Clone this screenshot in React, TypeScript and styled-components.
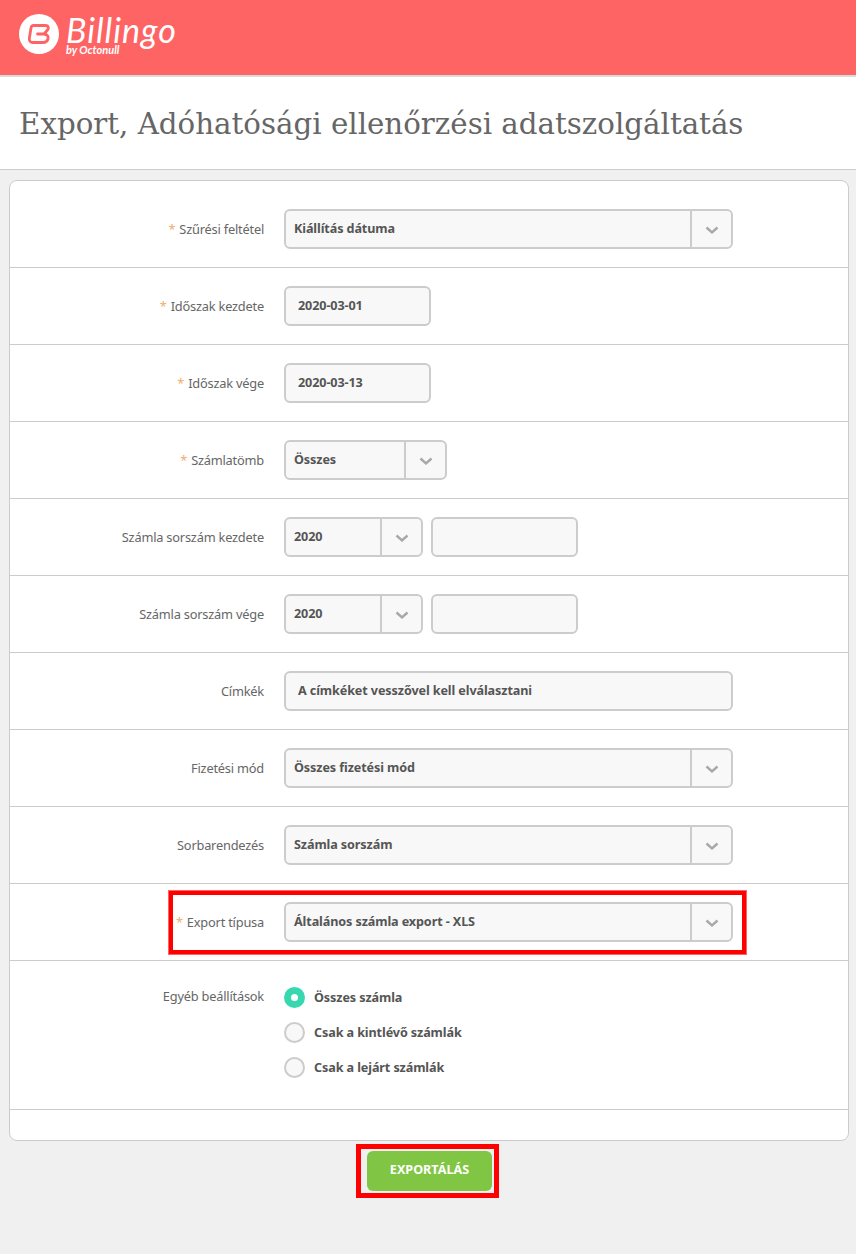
import React from "react";
import styled, { createGlobalStyle } from "styled-components";

const GlobalStyle = createGlobalStyle`
  html, body {
    margin: 0;
    padding: 0;
    background: #f0f0f0;
    font-family: "Noto Sans", "Open Sans", sans-serif;
    color: #555;
  }
`;

const Page = styled.div`
  width: 856px;
  height: 1254px;
  overflow: hidden;
`;

const Header = styled.header`
  height: 67px;
  background: #ff6464;
  border-bottom: 2px solid #d9d9d9;
  display: flex;
  align-items: center;
  padding: 0 0 8px 19px;
  gap: 7px;
`;

const Wordmark = styled.div`
  display: flex;
  flex-direction: column;
  color: #fff;
  margin-top: 5px;
`;

const WordmarkName = styled.span`
  font-family: "Lato", sans-serif;
  font-style: italic;
  font-size: 34px;
  line-height: 27px;
  letter-spacing: 1px;
`;

const WordmarkBy = styled.span`
  font-family: "Lato", sans-serif;
  font-style: italic;
  font-weight: 700;
  font-size: 11px;
  line-height: 13px;
`;

const TitleBar = styled.div`
  height: 92px;
  background: #fff;
  border-bottom: 1px solid #ccc;
  display: flex;
  align-items: center;
  padding-left: 19px;
`;

const Title = styled.h1`
  margin: 2px 0 0;
  font-family: "DejaVu Serif", serif;
  font-weight: 400;
  font-size: 29.3px;
  color: #666;
  white-space: nowrap;
`;

const Card = styled.div`
  margin: 10px 7px 0 9px;
  height: 961px;
  box-sizing: border-box;
  background: #fff;
  border: 1px solid #ccc;
  border-radius: 8px;
`;

const Row = styled.div<{ $first?: boolean; $top?: boolean }>`
  position: relative;
  display: grid;
  grid-template-columns: 254px 1fr;
  column-gap: 20px;
  align-items: ${(p) => (p.$top ? "start" : "center")};
  box-sizing: border-box;
  height: ${(p) => (p.$first ? "87px" : "77px")};
  padding-top: ${(p) => (p.$first ? "9px" : "0")};
  border-bottom: 1px solid #ccc;
`;

const OptionsRow = styled(Row)`
  height: 149px;
  padding-top: 26px;
`;

const Label = styled.label`
  text-align: right;
  font-size: 12.8px;
  letter-spacing: -0.2px;
  color: #666;
  white-space: nowrap;
`;

const Required = styled.span`
  color: #f0ad6e;
  margin-right: 4px;
`;

const Controls = styled.div`
  display: flex;
  gap: 8px;
`;

const Field = styled.div<{ $width: number; $inset?: number }>`
  width: ${(p) => p.$width}px;
  height: 40px;
  box-sizing: border-box;
  background: #f8f8f8;
  border: 2px solid #ccc;
  border-radius: 6px;
  padding: 0 0 1px ${(p) => p.$inset ?? 11}px;
  display: flex;
  align-items: center;
  font-size: 12.6px;
  font-weight: 700;
  letter-spacing: -0.1px;
  color: #555;
  white-space: nowrap;
`;

const SelectBox = styled(Field)`
  padding: 0 0 0 8px;
  justify-content: space-between;
`;

const SelectValue = styled.span`
  padding-bottom: 1px;
`;

const Arrow = styled.span`
  width: 41px;
  height: 100%;
  flex: none;
  border-left: 2px solid #ccc;
  display: flex;
  align-items: center;
  justify-content: center;
  padding-top: 3px;
  box-sizing: border-box;
`;

const RadioList = styled.div`
  display: flex;
  flex-direction: column;
  gap: 14px;
`;

const RadioRow = styled.div`
  display: flex;
  align-items: center;
  gap: 9px;
  height: 21px;
  font-size: 12.6px;
  font-weight: 700;
  letter-spacing: -0.1px;
  color: #555;
`;

const RadioDot = styled.span<{ $on?: boolean }>`
  width: 21px;
  height: 21px;
  box-sizing: border-box;
  border-radius: 50%;
  flex: none;
  background: ${(p) => (p.$on ? "#37d8b0" : "#f8f8f8")};
  border: 2px solid ${(p) => (p.$on ? "#37d8b0" : "#ccc")};
  display: flex;
  align-items: center;
  justify-content: center;
  &::after {
    content: "";
    display: ${(p) => (p.$on ? "block" : "none")};
    width: 7px;
    height: 7px;
    border-radius: 50%;
    background: #fff;
  }
`;

const Highlight = styled.div`
  position: absolute;
  left: 158px;
  top: 6px;
  width: 579px;
  height: 65px;
  box-sizing: border-box;
  border: 5px solid #f00;
  outline: 1px solid #ff6464;
  outline-offset: -1px;
  pointer-events: none;
`;

const Footer = styled.div`
  display: flex;
  justify-content: center;
  padding: 3px 1px 0 0;
`;

const ButtonFrame = styled.div`
  width: 143px;
  height: 54px;
  box-sizing: border-box;
  border: 5px solid #f00;
  display: flex;
  align-items: center;
  justify-content: center;
  padding-left: 4px;
`;

const ExportButton = styled.button`
  width: 125px;
  height: 40px;
  border: none;
  border-radius: 6px;
  background: #80c644;
  color: #fff;
  font-family: "Noto Sans", sans-serif;
  font-weight: 700;
  font-size: 12.6px;
  padding: 0 0 3px;
`;

const Chevron = () => (
  <svg width="14" height="9" viewBox="0 0 14 9" fill="none">
    <path d="M1.5 1.5 7 6.5 12.5 1.5" stroke="#a8a8a8" strokeWidth="2.4" />
  </svg>
);

const LogoMark = () => (
  <svg width="40" height="40" viewBox="0 0 40 40" fill="none">
    <circle cx="20" cy="20" r="20" fill="#fff" />
    <path
      d="M14.500 11.500H26.500C29.500 11.500 30 14 28.500 16L25 20C28.500 20.500 29.800 22.500 29 25C28.300 27.300 26.600 28.500 24 28.500H14C11 28.500 10 26.500 10.400 24L12 14C12.300 12.300 13 11.500 14.500 11.500ZM25 20H18.500"
      stroke="#ff6464"
      strokeWidth="2.8"
      strokeLinejoin="round"
      strokeLinecap="round"
    />
  </svg>
);

const Select = ({ value, width }: { value: string; width: number }) => (
  <SelectBox $width={width}>
    <SelectValue>{value}</SelectValue>
    <Arrow>
      <Chevron />
    </Arrow>
  </SelectBox>
);

export default function App() {
  return (
    <Page>
      <GlobalStyle />
      <Header>
        <LogoMark />
        <Wordmark>
          <WordmarkName>Billingo</WordmarkName>
          <WordmarkBy>by Octonull</WordmarkBy>
        </Wordmark>
      </Header>
      <TitleBar>
        <Title>Export, Adóhatósági ellenőrzési adatszolgáltatás</Title>
      </TitleBar>
      <Card>
        <Row $first>
          <Label>
            <Required>*</Required>Szűrési feltétel
          </Label>
          <Controls>
            <Select value="Kiállítás dátuma" width={449} />
          </Controls>
        </Row>
        <Row>
          <Label>
            <Required>*</Required>Időszak kezdete
          </Label>
          <Controls>
            <Field $width={147} $inset={12}>2020-03-01</Field>
          </Controls>
        </Row>
        <Row>
          <Label>
            <Required>*</Required>Időszak vége
          </Label>
          <Controls>
            <Field $width={147} $inset={12}>2020-03-13</Field>
          </Controls>
        </Row>
        <Row>
          <Label>
            <Required>*</Required>Számlatömb
          </Label>
          <Controls>
            <Select value="Összes" width={163} />
          </Controls>
        </Row>
        <Row>
          <Label>Számla sorszám kezdete</Label>
          <Controls>
            <Select value="2020" width={139} />
            <Field $width={147} />
          </Controls>
        </Row>
        <Row>
          <Label>Számla sorszám vége</Label>
          <Controls>
            <Select value="2020" width={139} />
            <Field $width={147} />
          </Controls>
        </Row>
        <Row>
          <Label>Címkék</Label>
          <Controls>
            <Field $width={449} $inset={12}>A címkéket vesszővel kell elválasztani</Field>
          </Controls>
        </Row>
        <Row>
          <Label>Fizetési mód</Label>
          <Controls>
            <Select value="Összes fizetési mód" width={449} />
          </Controls>
        </Row>
        <Row>
          <Label>Sorbarendezés</Label>
          <Controls>
            <Select value="Számla sorszám" width={449} />
          </Controls>
        </Row>
        <Row>
          <Label>
            <Required>*</Required>Export típusa
          </Label>
          <Controls>
            <Select value="Általános számla export - XLS" width={449} />
          </Controls>
          <Highlight />
        </Row>
        <OptionsRow $top>
          <Label>Egyéb beállítások</Label>
          <RadioList>
            <RadioRow>
              <RadioDot $on />
              Összes számla
            </RadioRow>
            <RadioRow>
              <RadioDot />
              Csak a kintlévő számlák
            </RadioRow>
            <RadioRow>
              <RadioDot />
              Csak a lejárt számlák
            </RadioRow>
          </RadioList>
        </OptionsRow>
      </Card>
      <Footer>
        <ButtonFrame>
          <ExportButton>EXPORTÁLÁS</ExportButton>
        </ButtonFrame>
      </Footer>
    </Page>
  );
}
